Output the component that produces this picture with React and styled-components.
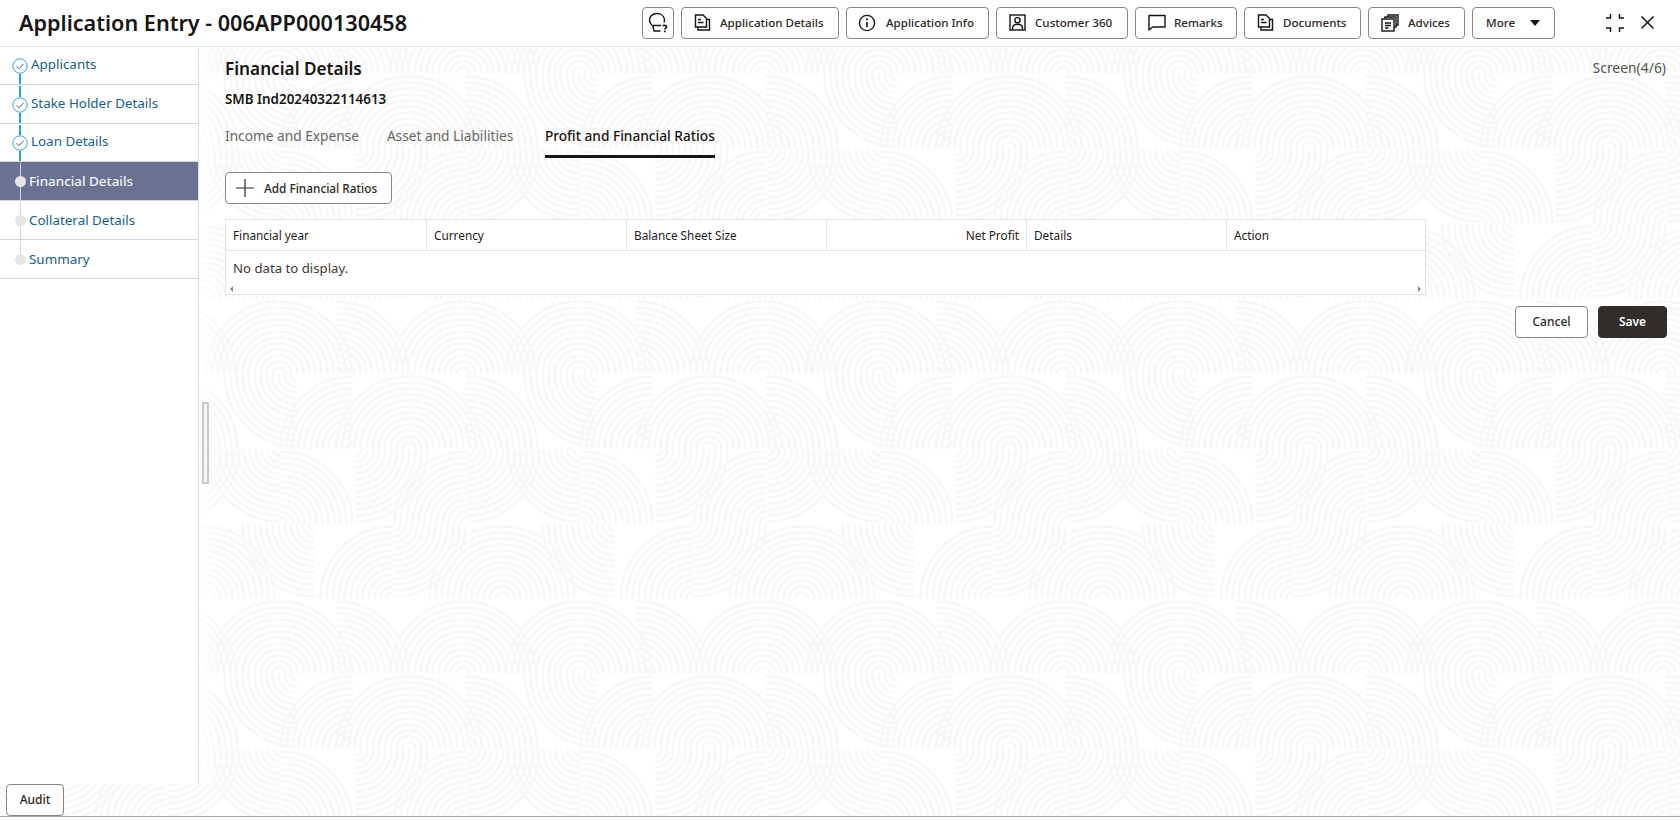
import React from "react";
import styled, { createGlobalStyle } from "styled-components";

const Global = createGlobalStyle`
  html, body { margin: 0; padding: 0; background: #fff; }
  body { font-family: "Noto Sans", "Open Sans", Arial, sans-serif; color: #1f1c1a; }
  * { box-sizing: border-box; }
`;

const Page = styled.div`
  position: relative;
  width: 1680px;
  height: 817px;
  display: flex;
  flex-direction: column;
  overflow: hidden;
  border-bottom: 1px solid #a3a3a3;
`;
const Backdrop = styled.svg`
  position: absolute;
  inset: 0;
  width: 1680px;
  height: 817px;
  z-index: 0;
`;
const Header = styled.header`
  position: relative;
  z-index: 1;
  height: 47px;
  flex: none;
  display: flex;
  align-items: center;
  background: #fff;
  border-bottom: 1px solid #e3e3e3;
  padding: 0 26px 1px 19px;
`;
const Title = styled.h1`
  margin: 0 auto 0 0;
  font-size: 21.6px;
  line-height: 28px;
  font-weight: 600;
  color: #161513;
  white-space: nowrap;
`;
const Toolbar = styled.div`
  display: flex;
  align-items: center;
  gap: 7px;
`;
const ToolButton = styled.button`
  height: 32px;
  width: ${(p) => p.$w}px;
  display: flex;
  align-items: center;
  gap: ${(p) => p.$gap}px;
  padding: 0 0 0 ${(p) => p.$pad}px;
  background: #fff;
  border: 1px solid #8b8785;
  border-radius: 4px;
  font: 500 11.6px/16px "Noto Sans", sans-serif;
  color: #2b2825;
  white-space: nowrap;
`;
const IconSvg = styled.svg`
  flex: none;
  display: block;
  fill: none;
  stroke: ${(p) => p.$color || "#161513"};
  stroke-width: ${(p) => p.$sw || 1.4};
`;
const WindowIcons = styled.div`
  display: flex;
  align-items: center;
  gap: 16px;
  margin-left: 50px;
`;
const Body = styled.div`
  position: relative;
  z-index: 1;
  flex: 1;
  min-height: 0;
  display: flex;
`;
const Sidebar = styled.nav`
  width: 199px;
  flex: none;
  background: #fff;
  border-right: 1px solid #d9dee7;
`;
const Step = styled.div`
  position: relative;
  height: ${(p) => p.$h}px;
  display: flex;
  align-items: center;
  padding: 0 0 ${(p) => (p.$done ? 3 : 0)}px ${(p) => (p.$done ? 31 : 29)}px;
  background: ${(p) => (p.$active ? "#6a7294" : "#fff")};
  border-bottom: 1px solid #d5d5d3;
  font-size: 13.4px;
  line-height: 20px;
  font-weight: ${(p) => (p.$active ? 500 : 400)};
  color: ${(p) => (p.$active ? "#f4f4f6" : "#17618c")};
`;
const Rail = styled.div`
  position: absolute;
  left: 12px;
  top: 1px;
  bottom: 0;
  width: 16px;
  display: flex;
  flex-direction: column;
  align-items: center;
`;
const RailLine = styled.span`
  flex: 1;
  width: ${(p) => (p.$done ? 1.5 : 1)}px;
  background: ${(p) => (p.$none ? "transparent" : p.$done ? "#1da5e0" : "#d6d6d6")};
`;
const Dot = styled.span`
  flex: none;
  width: 11px;
  height: 11px;
  border-radius: 50%;
  background: #e6e6e6;
`;
const Main = styled.main`
  position: relative;
  flex: 1;
  min-width: 0;
  padding: 7px 12px 0 26px;
`;
const EdgeFade = styled.div`
  position: absolute;
  left: 0;
  top: 0;
  bottom: 0;
  width: 22px;
  background: linear-gradient(90deg, rgba(255, 255, 255, 0.85), rgba(255, 255, 255, 0));
`;
const Content = styled.div`
  position: relative;
`;
const TitleRow = styled.div`
  display: flex;
  align-items: center;
  justify-content: space-between;
  height: 30px;
`;
const Heading = styled.h2`
  margin: 0;
  font-size: 17.2px;
  line-height: 24px;
  font-weight: 600;
  color: #161513;
`;
const ScreenCount = styled.span`
  margin: 0 2px 3px 0;
  font-size: 13.9px;
  color: #565350;
`;
const SubTitle = styled.div`
  margin-top: 5px;
  font-size: 13.4px;
  line-height: 20px;
  font-weight: 600;
  color: #161513;
`;
const Tabs = styled.div`
  display: flex;
  gap: 28px;
  margin-top: 9px;
`;
const Tab = styled.div`
  height: 40px;
  min-width: ${(p) => p.$min || 0}px;
  padding-top: 8px;
  font-size: 13.7px;
  line-height: 20px;
  font-weight: ${(p) => (p.$active ? 500 : 400)};
  color: ${(p) => (p.$active ? "#161513" : "#696663")};
  border-bottom: 3px solid ${(p) => (p.$active ? "#161513" : "transparent")};
`;
const AddButton = styled.button`
  display: flex;
  align-items: center;
  gap: 10px;
  width: 167px;
  height: 32px;
  margin-top: 14px;
  padding: 0 0 0 10px;
  background: #fff;
  border: 1px solid #8b8785;
  border-radius: 4px;
  font: 500 11.8px/16px "Noto Sans", sans-serif;
  color: #2b2825;
`;
const Table = styled.div`
  width: 1201px;
  margin-top: 15px;
  background: #fff;
  border: 1px solid #e4e4e4;
`;
const HeadRow = styled.div`
  display: grid;
  grid-template-columns: 201px repeat(4, 200px) 1fr;
  height: 31px;
  border-bottom: 1px solid #e4e4e4;
`;
const HeadCell = styled.div`
  display: flex;
  align-items: center;
  justify-content: ${(p) => (p.$right ? "flex-end" : "flex-start")};
  padding: 0 7px;
  font-size: 11.8px;
  font-weight: 400;
  color: #1f1c1a;
  border-right: ${(p) => (p.$last ? "none" : "1px solid #e4e4e4")};
`;
const EmptyRow = styled.div`
  height: 32px;
  padding: 8px 7px 0;
  font-size: 13.2px;
  line-height: 18px;
  color: #3f3c39;
`;
const ScrollRow = styled.div`
  height: 11px;
  display: flex;
  align-items: center;
  justify-content: space-between;
  padding: 0 4px 0 4px;
`;
const Arrow = styled.span`
  width: 0;
  height: 0;
  border-top: 3px solid transparent;
  border-bottom: 3px solid transparent;
  ${(p) => (p.$right ? "border-left: 3px solid #8a8a8a;" : "border-right: 3px solid #8a8a8a;")}
`;
const Actions = styled.div`
  display: flex;
  justify-content: flex-end;
  gap: 10px;
  margin: 11px 1px 0 0;
`;
const ActionButton = styled.button`
  width: ${(p) => p.$w}px;
  height: 32px;
  border-radius: 4px;
  border: 1px solid ${(p) => (p.$primary ? "#312d2a" : "#8b8785")};
  background: ${(p) => (p.$primary ? "#312d2a" : "#fff")};
  color: ${(p) => (p.$primary ? "#fff" : "#2b2825")};
  font: ${(p) => (p.$primary ? 600 : 500)} 12px/16px "Noto Sans", sans-serif;
`;
const Splitter = styled.div`
  position: absolute;
  left: 3px;
  top: 355px;
  width: 7px;
  height: 82px;
  background: #f7f7f7;
  border: 2px solid #c9c9c7;
`;
const Footer = styled.footer`
  position: relative;
  z-index: 1;
  height: 32px;
  flex: none;
  padding-left: 6px;
`;
const AuditButton = styled.button`
  width: 58px;
  height: 32px;
  padding: 0;
  background: #fff;
  border: 1px solid #8b8785;
  border-radius: 4px;
  font: 500 12px/16px "Noto Sans", sans-serif;
  color: #2b2825;
`;

/* Watermark: quarter-ring fans in 75px bands that repeat every 300px */
const BANDS = [
  { y: 0, q: [[279, "TL"], [279, "TR"], [336, "TR"], [463, "TL"], [463, "TR"]] },
  { y: 75, q: [[297, "BL"], [353, "TL"], [409, "TL"], [409, "TR"], [465, "TR"]] },
  { y: 150, q: [[280, "BL"], [280, "TR"], [355, "BR"], [467, "TL"], [467, "BR"]] },
  { y: 225, q: [[202, "TL"], [202, "TR"], [315, "BL"], [393, "TL"], [393, "BR"]] },
];
function quarterPath(cx, top, kind, r) {
  const cy = kind[0] === "T" ? top + 74.5 : top + 0.5;
  const s = kind[1] === "L" ? -1 : 1;
  const x = cx + s * 0.5;
  const v = kind[0] === "T" ? -1 : 1;
  return `M${x + s * r} ${cy}A${r} ${r} 0 0 ${s * v > 0 ? 1 : 0} ${x} ${cy + v * r}`;
}
function buildRings() {
  let d = "";
  BANDS.forEach((b) =>
    b.q.forEach(([cx, kind]) => {
      [-600, -300, 0].forEach((o) => {
        for (let r = 72; r > 2; r -= 6) d += quarterPath(cx + o, b.y, kind, r);
      });
    })
  );
  return d;
}
const ringPath = buildRings();

const Watermark = () => (
  <Backdrop aria-hidden="true">
    <defs>
      <pattern id="rings" patternUnits="userSpaceOnUse" x="0" y="299" width="300" height="300">
        <path d={ringPath} fill="none" stroke="#000" strokeOpacity="0.032" strokeWidth="2.4" />
      </pattern>
    </defs>
    <rect width="1680" height="817" fill="#fff" />
    <rect width="1680" height="817" fill="url(#rings)" />
  </Backdrop>
);

const DocsIcon = () => (
  <IconSvg width="17" height="17" viewBox="0 0 17 17">
    <path d="M1.5 1h7.5l3.5 3.5V13H1.5z" />
    <path d="M4 5.5h3M4 8.5h5.5" />
    <path d="M12.5 5.5h3V16H4v-3" />
  </IconSvg>
);
const InfoIcon = () => (
  <IconSvg width="18" height="18" viewBox="0 0 18 18">
    <circle cx="9" cy="9" r="7.6" />
    <path d="M9 8v5.2" strokeWidth="1.6" />
    <path d="M9 4.6v1.7" strokeWidth="1.8" />
  </IconSvg>
);
const CustomerIcon = () => (
  <IconSvg width="17" height="17" viewBox="0 0 17 17">
    <rect x="1" y="1" width="15" height="15" />
    <circle cx="8.5" cy="6.2" r="2.6" />
    <path d="M3.6 16v-2c0-2.4 2-3.8 4.9-3.8s4.9 1.4 4.9 3.8v2" />
  </IconSvg>
);
const RemarksIcon = () => (
  <IconSvg width="18" height="17" viewBox="0 0 18 17">
    <path d="M1 1.5h16v11.5H4.6L1 16z" strokeLinejoin="round" />
  </IconSvg>
);
const AdvicesIcon = () => (
  <IconSvg width="18" height="18" viewBox="0 0 18 18">
    <rect x="1" y="5" width="12" height="12" />
    <path d="M4 9h6M4 11.5h6M4 14h3.5" />
    <path d="M4 5V3h11v10h-2" />
    <path d="M7 3V1h10v10h-2" />
  </IconSvg>
);
const HelpIcon = () => (
  <IconSvg width="21" height="21" viewBox="0 0 21 21">
    <path d="M4.5 13.5C2.7 12.2 1.5 10 1.5 8 1.5 4.4 4.7 1.5 9 1.5c3.9 0 7 2.5 7.5 6 .1.9-.1 2-.5 3" />
    <path d="M4.5 13.5h8.5M4.8 13.5l1.2 5.5h6.5" />
    <path d="M15 14.2c.3-1.2 3.6-1.2 3.6.6 0 1.3-1.8 1.3-1.8 2.8" strokeWidth="1.6" />
    <path d="M16.8 18.6v1.6" strokeWidth="1.7" />
  </IconSvg>
);
const PlusIcon = () => (
  <IconSvg width="18" height="18" viewBox="0 0 18 18" $sw="1.2" $color="#2b2825">
    <path d="M9 0v18M0 9h18" />
  </IconSvg>
);
const Caret = () => (
  <svg width="10" height="6" viewBox="0 0 10 6" aria-hidden="true">
    <path d="M0 0h10L5 6z" fill="#161513" />
  </svg>
);
const CollapseIcon = () => (
  <IconSvg width="20" height="20" viewBox="0 0 20 20" $sw="1.5">
    <path d="M1 5h4.5V1M19 5h-4.5V1M1 15h4.5v4M19 15h-4.5v4" />
  </IconSvg>
);
const CloseIcon = () => (
  <IconSvg width="13" height="13" viewBox="0 0 13 13" $sw="1.5">
    <path d="M.5.5l12 12M12.5.5l-12 12" />
  </IconSvg>
);
const CheckCircle = () => (
  <IconSvg width="16" height="16" viewBox="0 0 16 16" $sw="1" $color="#3fa2dc">
    <circle cx="8" cy="8" r="7.2" />
    <path d="M4.4 8.2l2.6 2.6 4.8-5.2" stroke="#4e6272" />
  </IconSvg>
);

const tools = [
  { label: "Application Details", w: 158, Icon: DocsIcon, pad: 12, gap: 9 },
  { label: "Application Info", w: 143, Icon: InfoIcon, pad: 11, gap: 10 },
  { label: "Customer 360", w: 132, Icon: CustomerIcon, pad: 12, gap: 9 },
  { label: "Remarks", w: 102, Icon: RemarksIcon, pad: 12, gap: 8 },
  { label: "Documents", w: 117, Icon: DocsIcon, pad: 12, gap: 9 },
  { label: "Advices", w: 97, Icon: AdvicesIcon, pad: 12, gap: 9 },
];
const steps = [
  { label: "Applicants", h: 38, done: true, first: true },
  { label: "Stake Holder Details", h: 39, done: true },
  { label: "Loan Details", h: 38, done: true },
  { label: "Financial Details", h: 39, active: true },
  { label: "Collateral Details", h: 39 },
  { label: "Summary", h: 39, last: true },
];
const tabs = [
  { label: "Income and Expense" },
  { label: "Asset and Liabilities", min: 130 },
  { label: "Profit and Financial Ratios", active: true },
];
const columns = ["Financial year", "Currency", "Balance Sheet Size", "Net Profit", "Details", "Action"];

export default function App() {
  return (
    <Page>
      <Global />
      <Watermark />
      <Header>
        <Title>Application Entry - 006APP000130458</Title>
        <Toolbar>
          <ToolButton $w={32} $pad={5} $gap={0} aria-label="Help">
            <HelpIcon />
          </ToolButton>
          {tools.map(({ label, w, Icon, pad, gap }) => (
            <ToolButton key={label} $w={w} $pad={pad} $gap={gap}>
              <Icon />
              {label}
            </ToolButton>
          ))}
          <ToolButton $w={83} $gap={15} $pad={13}>
            More
            <Caret />
          </ToolButton>
        </Toolbar>
        <WindowIcons>
          <CollapseIcon />
          <CloseIcon />
        </WindowIcons>
      </Header>
      <Body>
        <Sidebar>
          {steps.map((s) => (
            <Step key={s.label} $h={s.h} $done={s.done} $active={s.active}>
              <Rail>
                <RailLine $done={s.done} $none={s.first} />
                {s.done ? <CheckCircle /> : <Dot />}
                <RailLine $done={s.done} $none={s.last} />
              </Rail>
              {s.label}
            </Step>
          ))}
        </Sidebar>
        <Main>
          <EdgeFade />
          <Splitter />
          <Content>
            <TitleRow>
              <Heading>Financial Details</Heading>
              <ScreenCount>Screen(4/6)</ScreenCount>
            </TitleRow>
            <SubTitle>SMB Ind20240322114613</SubTitle>
            <Tabs>
              {tabs.map((t) => (
                <Tab key={t.label} $active={t.active} $min={t.min}>
                  {t.label}
                </Tab>
              ))}
            </Tabs>
            <AddButton>
              <PlusIcon />
              Add Financial Ratios
            </AddButton>
            <Table>
              <HeadRow>
                {columns.map((c, i) => (
                  <HeadCell key={c} $right={c === "Net Profit"} $last={i === 5}>
                    {c}
                  </HeadCell>
                ))}
              </HeadRow>
              <EmptyRow>No data to display.</EmptyRow>
              <ScrollRow>
                <Arrow />
                <Arrow $right />
              </ScrollRow>
            </Table>
            <Actions>
              <ActionButton $w={73}>Cancel</ActionButton>
              <ActionButton $w={69} $primary>
                Save
              </ActionButton>
            </Actions>
          </Content>
        </Main>
      </Body>
      <Footer>
        <AuditButton>Audit</AuditButton>
      </Footer>
    </Page>
  );
}
